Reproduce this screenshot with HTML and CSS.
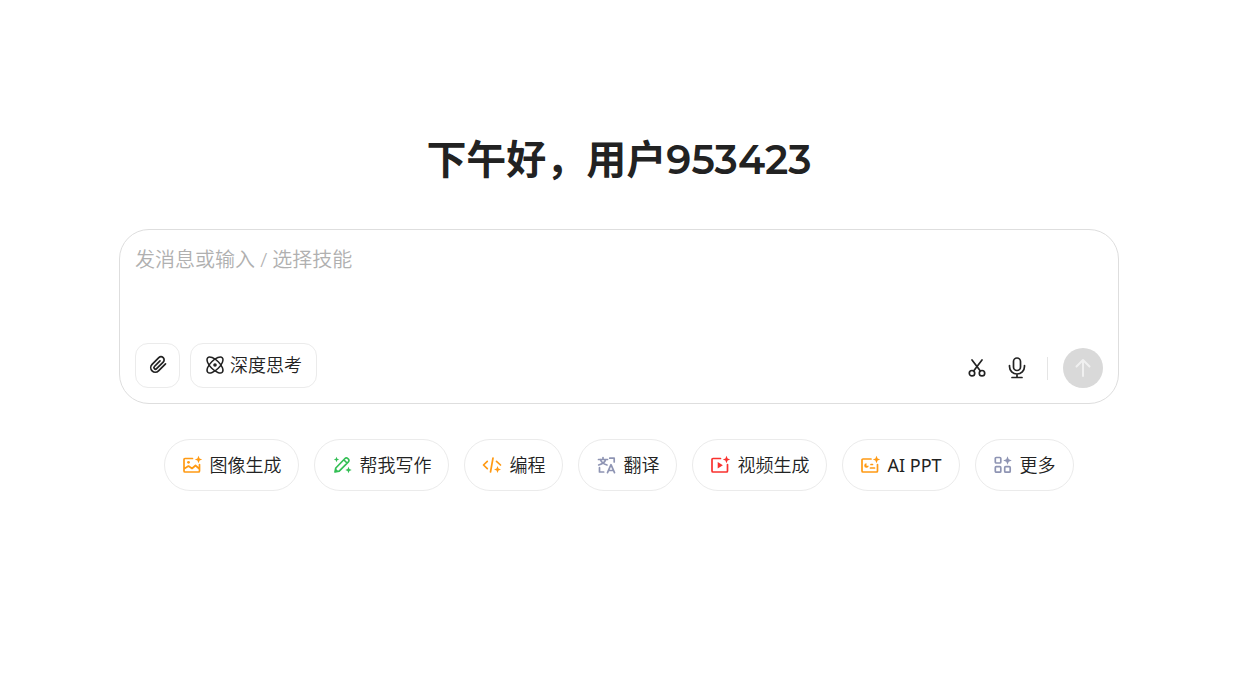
FILE: index.html
```html
<!DOCTYPE html>
<html lang="zh-CN">
<head>
    <meta charset="UTF-8">
    <meta name="viewport" content="width=device-width, initial-scale=1.0">
    <title>AI 助手</title>
    <link rel="stylesheet" href="styles.css">
</head>
<body>
    <main class="home">
        <h1 class="greeting">下午好，用户953423</h1>

        <!-- 输入框 -->
        <form class="composer">
            <textarea class="composer-input" rows="3" placeholder="发消息或输入 / 选择技能" aria-label="发消息"></textarea>
            <div class="toolbar">
                <button type="button" class="tool" aria-label="上传附件">
                    <svg class="icon" viewBox="0 0 20 20">
                        <path d="M17.500 8.800l-7 7a4.500 4.500 0 0 1-6.400-6.400l6.700-6.700a3.100 3.100 0 0 1 4.400 4.400l-6.600 6.600a1.500 1.500 0 0 1-2.200-2.200l5.600-5.600"/>
                    </svg>
                </button>
                <button type="button" class="tool tool-text">
                    <svg class="icon icon-thin" viewBox="0 0 20 20">
                        <ellipse cx="10" cy="10" rx="10.3" ry="4.600" transform="rotate(45 10 10)"/>
                        <ellipse cx="10" cy="10" rx="10.3" ry="4.600" transform="rotate(-45 10 10)"/>
                        <circle class="fill" cx="10" cy="10" r="1.800"/>
                    </svg>
                    深度思考
                </button>
                <div class="actions">
                    <button type="button" class="action" aria-label="截图">
                        <svg class="icon" viewBox="0 0 20 20">
                            <circle cx="5" cy="15.200" r="2.700"/>
                            <circle cx="15" cy="15.200" r="2.700"/>
                            <path d="M5 2l8.400 10.900M15 2L6.600 12.900"/>
                        </svg>
                    </button>
                    <button type="button" class="action" aria-label="语音输入">
                        <svg class="icon icon-mic" viewBox="0 0 22 22">
                            <rect x="7.500" y="1" width="7" height="12.500" rx="3.500"/>
                            <path d="M3.500 8.500V9.500a7.500 7.500 0 0 0 15 0V8.500M11 17v3.500M6 20.500h10"/>
                        </svg>
                    </button>
                    <span class="divider"></span>
                    <button type="submit" class="send" aria-label="发送">
                        <svg class="icon icon-send" viewBox="0 0 20 20">
                            <path d="M10 18V2M3.500 8.500L10 2l6.500 6.500"/>
                        </svg>
                    </button>
                </div>
            </div>
        </form>

        <!-- 技能 -->
        <div class="skills">
            <button type="button" class="skill">
                <svg class="icon orange" viewBox="0 0 20 20">
                    <path d="M10.500 3.500H3a1 1 0 0 0-1 1v11.500a1 1 0 0 0 1 1h13.500a1 1 0 0 0 1-1V9.500M2.500 13.500l4-2.500 3.500 2.500 3.500-3 3.500 3"/>
                    <circle class="fill" cx="6.500" cy="7.300" r="1.400"/>
                    <path class="fill" d="M16.500.8l1.100 2.600 2.600 1.100-2.600 1.100-1.100 2.600-1.100-2.600-2.600-1.100 2.600-1.100z"/>
                </svg>
                图像生成
            </button>
            <button type="button" class="skill">
                <svg class="icon green" viewBox="0 0 20 20">
                    <path d="M3 17l.8-4L13 3.500a1.900 1.900 0 0 1 2.700 0l.7.7a1.900 1.900 0 0 1 0 2.700L7.200 16.200zM12 5l3 3"/>
                    <path class="fill" d="M2.800 17.200l.8-3.700 2.900 2.900zM4.500 1.800l.8 1.900 1.900.8-1.900.8-.8 1.900-.8-1.900-1.900-.8 1.900-.8zM16.500 11.800l.9 2.300 2.300.9-2.300.9-.9 2.300-.9-2.300-2.300-.9 2.300-.9z"/>
                </svg>
                帮我写作
            </button>
            <button type="button" class="skill">
                <svg class="icon orange" viewBox="0 0 20 20">
                    <path d="M5.300 6.300L1.500 10l3.800 3.700M11 3L8.500 17M14.500 6.300L18.500 10"/>
                    <path class="fill" d="M15.500 10.900l1 2.500 2.500 1-2.500 1-1 2.500-1-2.500-2.500-1 2.500-1z"/>
                </svg>
                编程
            </button>
            <button type="button" class="skill">
                <svg class="icon slate" viewBox="0 0 20 20">
                    <path d="M2.500 4.500h9M7 2.500v2M9.700 4.500C9 7 6.500 9 2.700 10M4.300 4.500C5.300 7 7.500 9 11 10M13.700 3.200h4.500V7M3.500 12.700v4.300H7.700M11.500 17.700l3.500-8 3.500 8M12.600 15.500h4.800"/>
                </svg>
                翻译
            </button>
            <button type="button" class="skill">
                <svg class="icon red" viewBox="0 0 20 20">
                    <path d="M10.500 3.500H3a1 1 0 0 0-1 1v11.500a1 1 0 0 0 1 1h13.500a1 1 0 0 0 1-1V9.500"/>
                    <path class="fill" d="M7.700 7v6.400l5.200-3.200zM16.500.8l1.100 2.600 2.600 1.100-2.600 1.100-1.100 2.600-1.100-2.600-2.600-1.100 2.600-1.100z"/>
                </svg>
                视频生成
            </button>
            <button type="button" class="skill latin">
                <svg class="icon orange" viewBox="0 0 20 20">
                    <path d="M11 4H3a1 1 0 0 0-1 1v11a1 1 0 0 0 1 1h13.500a1 1 0 0 0 1-1V9.500M11 9.500h1.500M10.500 13h4"/>
                    <path class="fill" d="M6.500 8.200v2.600h2.300a2.300 2.300 0 1 1-2.300-2.600zM16.500.8l1.100 2.600 2.600 1.100-2.600 1.100-1.100 2.600-1.100-2.600-2.600-1.100 2.600-1.100z"/>
                </svg>
                AI PPT
            </button>
            <button type="button" class="skill">
                <svg class="icon slate" viewBox="0 0 20 20">
                    <rect x="2.300" y="2.500" width="5.500" height="5.500" rx="1"/>
                    <rect x="2.300" y="11.700" width="5.500" height="5.500" rx="1"/>
                    <rect x="11.700" y="11.700" width="5.500" height="5.500" rx="1"/>
                    <path class="fill" d="M14.500 1.200l1.200 3.100 3.100 1.200-3.100 1.200-1.200 3.100-1.200-3.100-3.100-1.200 3.100-1.200z"/>
                </svg>
                更多
            </button>
        </div>
    </main>
</body>
</html>
```

FILE: styles.css
```css
* {
    box-sizing: border-box;
}

body {
    margin: 0;
    background: #fff;
    color: #222;
    font-family: "Noto Sans", "Noto Sans CJK SC", sans-serif;
}

.home {
    display: flex;
    flex-direction: column;
    align-items: center;
    padding: 135px 20px 40px 15px;
}

.greeting {
    margin: 0 0 44px;
    font-family: Montserrat, "Noto Sans CJK SC", sans-serif;
    font-size: 40px;
    line-height: 50px;
    font-weight: 600;
}

button {
    display: flex;
    align-items: center;
    justify-content: center;
    padding: 0;
    border: 1px solid #ebebeb;
    background: #fff;
    color: inherit;
    font-family: inherit;
    font-size: 18px;
    font-weight: 350;
    line-height: 24px;
    cursor: pointer;
}

.icon {
    width: 20px;
    height: 20px;
    flex-shrink: 0;
    fill: none;
    stroke: currentColor;
    stroke-width: 1.7;
    stroke-linecap: round;
    stroke-linejoin: round;
    overflow: visible;
}

.icon .fill {
    fill: currentColor;
    stroke: none;
}

.icon-thin {
    stroke-width: 1.5;
}

.composer {
    width: 100%;
    max-width: 1000px;
    padding: 15px;
    border: 1px solid #dedede;
    border-radius: 30px;
}

.composer-input {
    display: block;
    width: 100%;
    margin: 0 0 8px;
    padding: 0;
    border: none;
    outline: none;
    resize: none;
    background: transparent;
    color: inherit;
    font-family: inherit;
    font-size: 20px;
    line-height: 30px;
}

.composer-input::placeholder {
    color: #b0b0b0;
    font-weight: 350;
}

.toolbar {
    display: flex;
    align-items: flex-end;
    gap: 10px;
}

.tool {
    width: 45px;
    height: 45px;
    padding-bottom: 2px;
    border-radius: 13px;
}

.tool-text {
    width: auto;
    padding: 0 14px 2px;
    gap: 5px;
}

.actions {
    display: flex;
    align-items: center;
    margin-left: auto;
}

.action {
    width: 40px;
    height: 40px;
    border: none;
}

.icon-mic {
    width: 22px;
    height: 22px;
}

.divider {
    width: 1px;
    height: 23px;
    margin: 0 15px 0 10px;
    background: #e5e5e5;
}

.send {
    width: 40px;
    height: 40px;
    border: none;
    border-radius: 50%;
    background: #d9d9d9;
    color: #f0f0f0;
}

.icon-send {
    stroke-width: 2;
}

.skills {
    display: flex;
    flex-wrap: wrap;
    justify-content: center;
    gap: 15px;
    margin-top: 35px;
}

.skill {
    height: 52px;
    padding: 0 17px;
    gap: 7px;
    border-radius: 26px;
}

.latin {
    font-weight: 400;
}

.orange {
    color: #ff9a14;
}

.green {
    color: #34bf55;
}

.slate {
    color: #8e94b3;
}

.red {
    color: #f9322f;
}
```
